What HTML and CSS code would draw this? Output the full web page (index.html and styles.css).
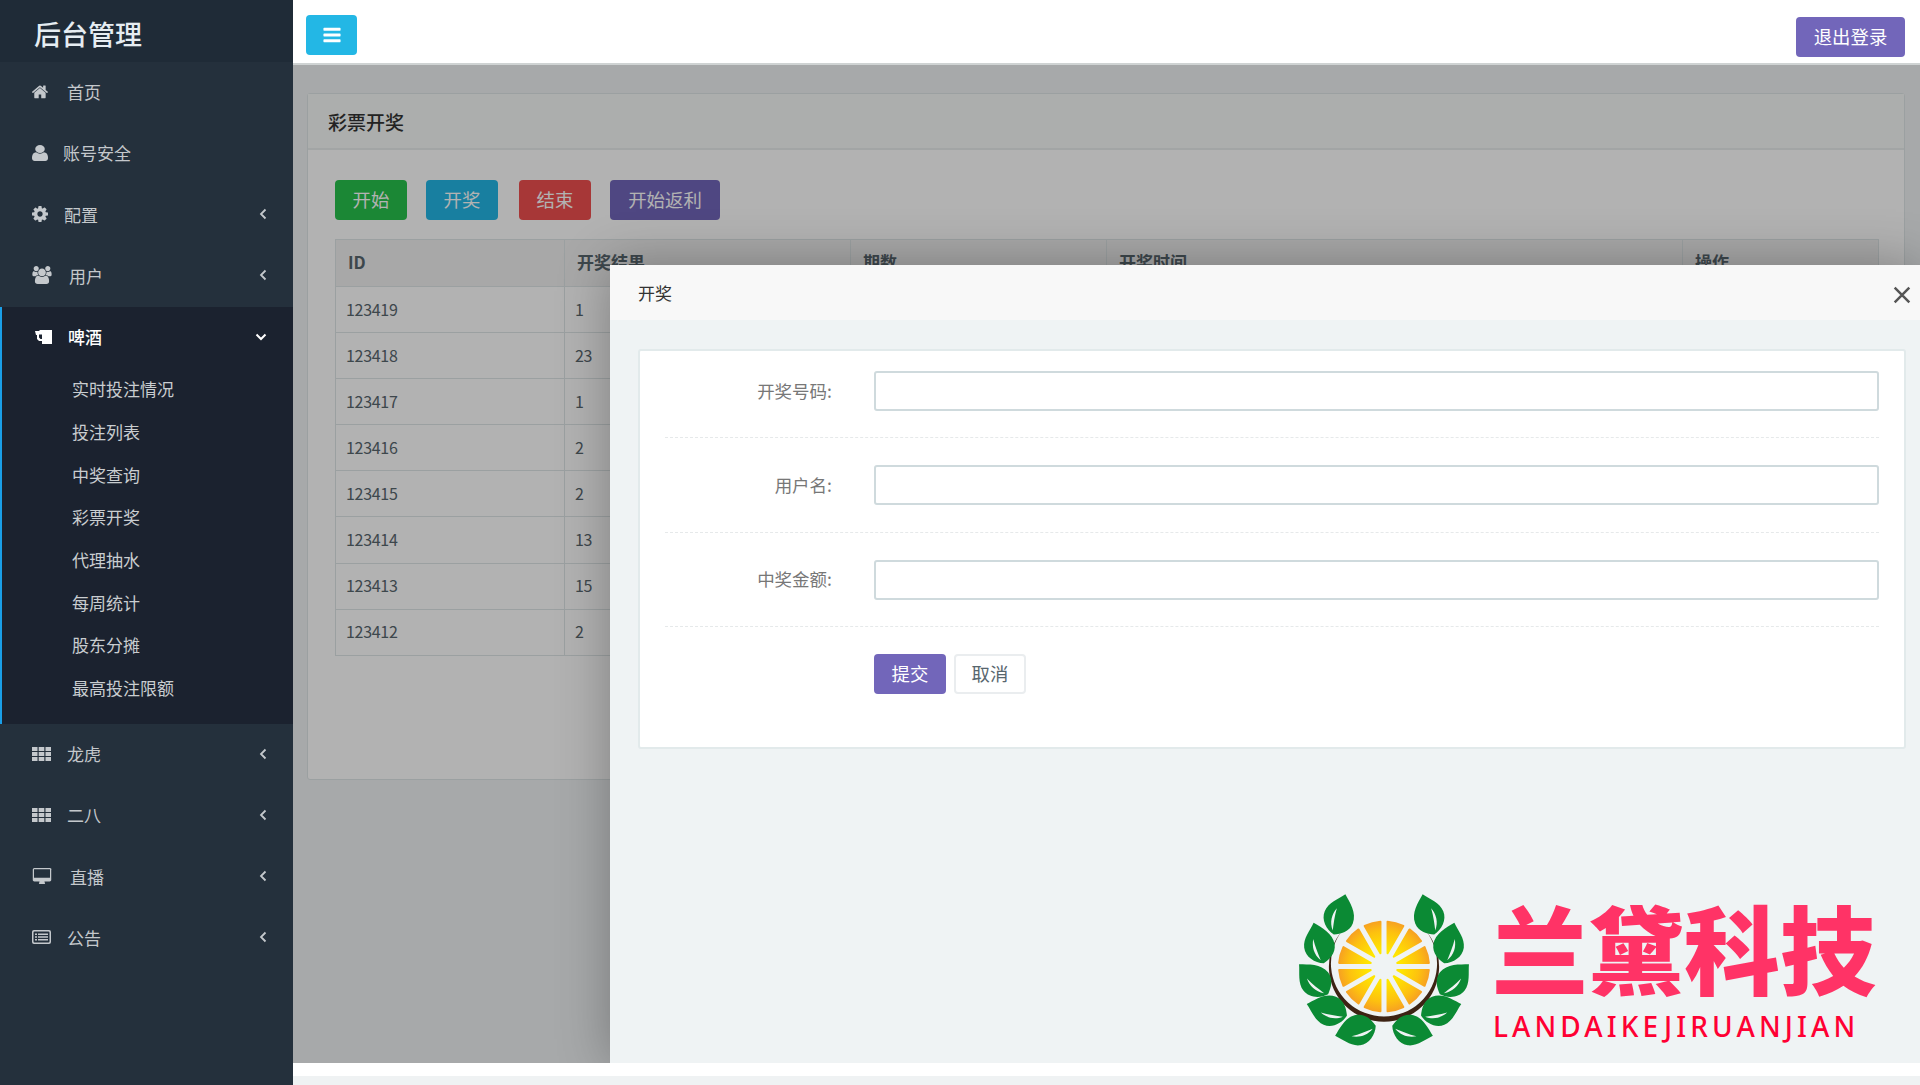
FILE: index.html
```html
<!DOCTYPE html>
<html lang="zh-CN">
<head>
    <meta charset="UTF-8">
    <title>后台管理</title>
    <link rel="stylesheet" href="styles.css">
</head>
<body>
    <svg class="sprites" xmlns="http://www.w3.org/2000/svg">
        <symbol id="i-bars" viewBox="0 0 1792 1792"><path d="M1664 1344v128q0 26-19 45t-45 19h-1408q-26 0-45-19t-19-45v-128q0-26 19-45t45-19h1408q26 0 45 19t19 45zm0-512v128q0 26-19 45t-45 19h-1408q-26 0-45-19t-19-45v-128q0-26 19-45t45-19h1408q26 0 45 19t19 45zm0-512v128q0 26-19 45t-45 19h-1408q-26 0-45-19t-19-45v-128q0-26 19-45t45-19h1408q26 0 45 19t19 45z"/></symbol>
        <symbol id="i-home" viewBox="90 250 1620 1310"><path d="M1472 992v480q0 26-19 45t-45 19h-384v-384h-256v384h-384q-26 0-45-19t-19-45v-480q0-1 .5-3t.5-3l575-474 575 474q1 2 1 6zm223-69l-62 74q-8 9-21 11h-3q-13 0-21-7l-692-577-692 577q-12 8-24 7-13-2-21-11l-62-74q-8-10-7-23.5t11-21.5l719-599q32-26 76-26t76 26l244 204v-195q0-14 9-23t23-9h192q14 0 23 9t9 23v408l219 182q10 8 11 21.5t-7 23.5z"/></symbol>
        <symbol id="i-user" viewBox="256 128 1280 1536" preserveAspectRatio="none"><path d="M1536 1399q0 109-62.5 187t-150.5 78h-854q-88 0-150.5-78t-62.5-187q0-85 8.5-160.5t31.5-152 58.5-131 94-89 134.5-34.5q131 128 313 128t313-128q76 0 134.5 34.5t94 89 58.5 131 31.5 152 8.5 160.5zm-256-887q0 159-112.5 271.5t-271.5 112.5-271.5-112.5-112.5-271.5 112.5-271.5 271.5-112.5 271.5 112.5 112.5 271.5z"/></symbol>
        <symbol id="i-gear" viewBox="128 128 1536 1536"><path d="M1152 896q0-106-75-181t-181-75-181 75-75 181 75 181 181 75 181-75 75-181zm512-109v222q0 12-8 23t-20 13l-185 28q-19 54-39 91 35 50 107 138 10 12 10 25t-9 23q-27 37-99 108t-94 71q-12 0-26-9l-138-108q-44 23-91 38-16 136-29 186-7 28-36 28h-222q-14 0-24.5-8.5t-11.5-21.5l-28-184q-49-16-90-37l-141 107q-10 9-25 9-14 0-25-11-126-114-165-168-7-10-7-23 0-12 8-23 15-21 51-66.5t54-70.5q-27-50-41-99l-183-27q-13-2-21-12.5t-8-23.5v-222q0-12 8-23t19-13l186-28q14-46 39-92-40-57-107-138-10-12-10-24 0-10 9-23 26-36 98.5-107.5t94.5-71.5q13 0 26 10l138 107q44-23 91-38 16-136 29-186 7-28 36-28h222q14 0 24.5 8.5t11.5 21.5l28 184q49 16 90 37l142-107q9-9 24-9 13 0 25 10 129 119 165 170 7 8 7 22 0 12-8 23-15 21-51 66.5t-54 70.5q26 50 41 98l183 28q13 2 21 12.5t8 23.5z"/></symbol>
        <symbol id="i-users" viewBox="0 0 1920 1792"><path d="M593 896q-162 5-265 128h-134q-82 0-138-40.5t-56-118.5q0-353 124-353 6 0 43.5 21t97.5 42.5 119 21.5q67 0 133-23-5 37-5 66 0 139 81 256zm1071 637q0 120-73 189.5t-194 69.5h-874q-121 0-194-69.5t-73-189.5q0-53 3.5-103.5t14-109 26.5-108.5 43-97.5 62-81 85.5-53.5 111.5-20q10 0 43 21.5t73 48 107 48 135 21.5 135-21.5 107-48 73-48 43-21.5q61 0 111.5 20t85.5 53.5 62 81 43 97.5 26.5 108.5 14 109 3.5 103.5zm-1024-1277q0 106-75 181t-181 75-181-75-75-181 75-181 181-75 181 75 75 181zm704 384q0 159-112.5 271.5t-271.5 112.5-271.5-112.5-112.5-271.5 112.5-271.5 271.5-112.5 271.5 112.5 112.5 271.5zm576 225q0 78-56 118.5t-138 40.5h-134q-103-123-265-128 81-117 81-256 0-29-5-66 66 23 133 23 59 0 119-21.5t97.5-42.5 43.5-21q124 0 124 353zm-128-609q0 106-75 181t-181 75-181-75-75-181 75-181 181-75 181 75 75 181z"/></symbol>
        <symbol id="i-beer" viewBox="0 0 17 14"><path fill-rule="evenodd" d="M0 1h4l1-1h12v14H7v-3H4L2 9V5H1zM4 4.500v3l1.500 1.500H7V4.500z"/></symbol>
        <symbol id="i-th" viewBox="0 0 19 14"><path d="M0 0h5.500v4H0zM6.700 0h5.600v4H6.700zM13.500 0H19v4h-5.500zM0 5h5.500v4H0zM6.700 5h5.600v4H6.700zM13.500 5H19v4h-5.500zM0 10h5.500v4H0zM6.700 10h5.600v4H6.700zM13.500 10H19v4h-5.500z"/></symbol>
        <symbol id="i-desktop" viewBox="0 0 1920 1664"><path d="M1792 992v-832q0-13-9.500-22.500t-22.500-9.500h-1600q-13 0-22.500 9.500t-9.500 22.500v832q0 13 9.500 22.500t22.500 9.500h1600q13 0 22.500-9.500t9.500-22.500zm128-832v1088q0 66-47 113t-113 47h-544q0 37 16 77.500t32 71 16 43.500q0 26-19 45t-45 19h-512q-26 0-45-19t-19-45q0-14 16-44t32-70 16-78h-544q-66 0-113-47t-47-113v-1088q0-66 47-113t113-47h1632q66 0 113 47t47 113z"/></symbol>
        <symbol id="i-list" viewBox="0 0 19 14"><path fill-rule="evenodd" d="M2 0h15a2 2 0 0 1 2 2v10a2 2 0 0 1-2 2H2a2 2 0 0 1-2-2V2a2 2 0 0 1 2-2zM1.500 2.500v9a1 1 0 0 0 1 1h14a1 1 0 0 0 1-1v-9a1 1 0 0 0-1-1h-14a1 1 0 0 0-1 1zM3 3.500h2v1.500H3zM6 3.500h10v1.500H6zM3 6.300h2v1.500H3zM6 6.300h10v1.500H6zM3 9h2v1.500H3zM6 9h10v1.500H6z"/></symbol>
        <symbol id="i-left" viewBox="0 0 8 12"><path d="M6.500 1.500L2 6l4.500 4.500" fill="none" stroke="currentColor" stroke-width="1.800"/></symbol>
        <symbol id="i-down" viewBox="0 0 12 8"><path d="M1.500 1.500L6 6l4.500-4.500" fill="none" stroke="currentColor" stroke-width="2"/></symbol>
        <symbol id="leaf" viewBox="-16 -22 32 44" preserveAspectRatio="none"><path d="M0-20.500C6-14 15-6 14 5 13 14 6 18 0 20.500-8 18-15 10-14 1-13-8-5-14 0-20.500z" fill="#0b8a34"/><path d="M-2 17C-7 10-7 2-4-5-4 3-3 10-2 17z" fill="#eff3f4"/></symbol>
        <radialGradient id="citrus" gradientUnits="userSpaceOnUse" cx="0" cy="0" r="46"><stop offset="0.350" stop-color="#ffe600"/><stop offset="0.750" stop-color="#fdc10f"/><stop offset="1" stop-color="#f69d24"/></radialGradient>
        <symbol id="wedge" viewBox="-50 -50 100 100" overflow="visible"><path d="M0-13.500L8-43.300A44 44 0 0 0-8-43.300z" fill="url(#citrus)" stroke="url(#citrus)" stroke-width="2" stroke-linejoin="round"/></symbol>
    </svg>

    <aside class="sidebar">
        <div class="brand">后台管理</div>
        <ul class="nav">
            <li><a class="nav-link"><svg class="ic ic-home"><use href="#i-home"/></svg>首页</a></li>
            <li><a class="nav-link"><svg class="ic ic-user"><use href="#i-user"/></svg>账号安全</a></li>
            <li><a class="nav-link"><svg class="ic ic-gear"><use href="#i-gear"/></svg>配置<svg class="arrow"><use href="#i-left"/></svg></a></li>
            <li><a class="nav-link"><svg class="ic ic-users"><use href="#i-users"/></svg>用户<svg class="arrow"><use href="#i-left"/></svg></a></li>
            <li class="active">
                <a class="nav-link"><svg class="ic ic-beer"><use href="#i-beer"/></svg>啤酒<svg class="arrow-down"><use href="#i-down"/></svg></a>
                <ul class="subnav">
                    <li>实时投注情况</li>
                    <li>投注列表</li>
                    <li>中奖查询</li>
                    <li>彩票开奖</li>
                    <li>代理抽水</li>
                    <li>每周统计</li>
                    <li>股东分摊</li>
                    <li>最高投注限额</li>
                </ul>
            </li>
            <li><a class="nav-link"><svg class="ic ic-th"><use href="#i-th"/></svg>龙虎<svg class="arrow"><use href="#i-left"/></svg></a></li>
            <li><a class="nav-link"><svg class="ic ic-th"><use href="#i-th"/></svg>二八<svg class="arrow"><use href="#i-left"/></svg></a></li>
            <li><a class="nav-link"><svg class="ic ic-desktop"><use href="#i-desktop"/></svg>直播<svg class="arrow"><use href="#i-left"/></svg></a></li>
            <li><a class="nav-link"><svg class="ic ic-list"><use href="#i-list"/></svg>公告<svg class="arrow"><use href="#i-left"/></svg></a></li>
        </ul>
    </aside>

    <div class="main">
        <header class="topbar">
            <button class="btn btn-info btn-menu"><svg class="bars"><use href="#i-bars"/></svg></button>
            <button class="btn btn-purple btn-logout">退出登录</button>
        </header>

        <section class="content">
            <div class="panel">
                <div class="panel-head">彩票开奖</div>
                <div class="panel-body">
                    <div class="actions">
                        <button class="btn btn-success">开始</button>
                        <button class="btn btn-info">开奖</button>
                        <button class="btn btn-danger">结束</button>
                        <button class="btn btn-purple">开始返利</button>
                    </div>
                    <table class="grid">
                        <thead>
                            <tr><th class="c-id">ID</th><th class="c-res">开奖结果</th><th class="c-no">期数</th><th class="c-time">开奖时间</th><th>操作</th></tr>
                        </thead>
                        <tbody>
                            <tr><td>123419</td><td>1</td><td></td><td></td><td></td></tr>
                            <tr><td>123418</td><td>23</td><td></td><td></td><td></td></tr>
                            <tr><td>123417</td><td>1</td><td></td><td></td><td></td></tr>
                            <tr><td>123416</td><td>2</td><td></td><td></td><td></td></tr>
                            <tr><td>123415</td><td>2</td><td></td><td></td><td></td></tr>
                            <tr><td>123414</td><td>13</td><td></td><td></td><td></td></tr>
                            <tr><td>123413</td><td>15</td><td></td><td></td><td></td></tr>
                            <tr><td>123412</td><td>2</td><td></td><td></td><td></td></tr>
                        </tbody>
                    </table>
                </div>
            </div>

            <div class="shade"></div>

            <div class="modal">
                <div class="modal-head">
                    <span>开奖</span>
                    <svg class="close" viewBox="0 0 16 16"><path d="M1.500 1.500l13 13M14.500 1.500l-13 13"/></svg>
                </div>
                <div class="modal-body">
                    <form class="form-card">
                        <div class="form-row"><label>开奖号码:</label><input type="text"></div>
                        <div class="form-row"><label>用户名:</label><input type="text"></div>
                        <div class="form-row"><label>中奖金额:</label><input type="text"></div>
                        <div class="form-btns">
                            <button type="button" class="btn btn-purple">提交</button>
                            <button type="button" class="btn btn-default">取消</button>
                        </div>
                    </form>
                </div>
            </div>
        </section>

        <div class="strip"></div>
        <footer class="foot"></footer>
    </div>

    <div class="watermark">
        <svg class="wm-logo" viewBox="-87 -72 174 146">
            <use href="#wedge" x="-50" y="-50" width="100" height="100" transform="rotate(15)"/>
            <use href="#wedge" x="-50" y="-50" width="100" height="100" transform="rotate(45)"/>
            <use href="#wedge" x="-50" y="-50" width="100" height="100" transform="rotate(75)"/>
            <use href="#wedge" x="-50" y="-50" width="100" height="100" transform="rotate(105)"/>
            <use href="#wedge" x="-50" y="-50" width="100" height="100" transform="rotate(135)"/>
            <use href="#wedge" x="-50" y="-50" width="100" height="100" transform="rotate(165)"/>
            <use href="#wedge" x="-50" y="-50" width="100" height="100" transform="rotate(195)"/>
            <use href="#wedge" x="-50" y="-50" width="100" height="100" transform="rotate(225)"/>
            <use href="#wedge" x="-50" y="-50" width="100" height="100" transform="rotate(255)"/>
            <use href="#wedge" x="-50" y="-50" width="100" height="100" transform="rotate(285)"/>
            <use href="#wedge" x="-50" y="-50" width="100" height="100" transform="rotate(315)"/>
            <use href="#wedge" x="-50" y="-50" width="100" height="100" transform="rotate(345)"/>
            <path d="M-41-35A54 54 0 1 0 41-35 52 52 0 1 1-41-35z" fill="#3d2314"/>
            <g id="leaves">
                <use href="#leaf" x="-17" y="-22" width="34" height="44" transform="translate(-43.500 -51) rotate(16)"/>
                <use href="#leaf" x="-17" y="-22" width="34" height="44" transform="translate(-64 -23) rotate(-14)"/>
                <use href="#leaf" x="-17" y="-22" width="34" height="44" transform="translate(-69 12.500) rotate(-44)"/>
                <use href="#leaf" x="-17" y="-22" width="34" height="44" transform="translate(-56 42.500) rotate(-74)"/>
                <use href="#leaf" x="-17" y="-22" width="34" height="44" transform="translate(-28 63) rotate(-104)"/>
            </g>
            <use href="#leaves" transform="scale(-1 1)"/>
        </svg>
        <div class="wm-text">
            <div class="wm-cn">兰黛科技</div>
            <div class="wm-en">LANDAIKEJIRUANJIAN</div>
        </div>
    </div>
</body>
</html>
```

FILE: styles.css
```css
* {
    box-sizing: border-box;
}
html, body {
    margin: 0;
    height: 100%;
}
body {
    display: flex;
    height: 1085px;
    overflow: hidden;
    position: relative;
    font-family: "Noto Sans CJK SC", "Liberation Sans", sans-serif;
    font-size: 17px;
    color: #58666e;
    background: #f0f3f4;
}
ul {
    list-style: none;
    margin: 0;
    padding: 0;
}
.sprites {
    position: absolute;
    width: 0;
    height: 0;
}

/* sidebar */
.sidebar {
    width: 293px;
    flex: none;
    background: #24303c;
    color: #c4c8cc;
}
.brand {
    height: 62px;
    padding-left: 34px;
    font-size: 27px;
    font-weight: 500;
    line-height: 68px;
    color: #e6edf2;
    background: #1f2b37;
}
.nav-link {
    display: flex;
    align-items: center;
    height: 61.25px;
    padding: 0 0 2px 32px;
}
.ic {
    fill: currentColor;
    flex: none;
}
.ic-home { width: 16px; height: 14px; margin-right: 19px; }
.ic-user { width: 16px; height: 16px; margin-right: 15px; }
.ic-gear { width: 16px; height: 16px; margin-right: 16px; }
.ic-users { width: 20px; height: 18px; margin-right: 17px; }
.ic-beer { width: 17px; height: 14px; margin: 0 16px 0 3px; }
.ic-th { width: 19px; height: 14px; margin-right: 16px; }
.ic-desktop { width: 20px; height: 16px; margin-right: 18px; }
.ic-list { width: 19px; height: 14px; margin-right: 16px; }
.arrow {
    width: 8px;
    height: 12px;
    margin-left: auto;
    margin-right: 26px;
}
.arrow-down {
    width: 12px;
    height: 8px;
    margin-left: auto;
    margin-right: 26px;
}
.active {
    background: #1b222f;
    box-shadow: inset 2px 0 0 #1a9fe8;
    color: #fff;
    height: 417px;
    font-weight: 500;
}
.subnav {
    padding-left: 72px;
    color: #c9cdd0;
    font-weight: 400;
}
.subnav li {
    height: 42.7px;
    line-height: 42.7px;
}

/* main */
.main {
    flex: 1;
    display: flex;
    flex-direction: column;
    min-width: 0;
}
.topbar {
    height: 65px;
    flex: none;
    display: flex;
    align-items: flex-start;
    justify-content: space-between;
    padding: 15px 15px 0 13px;
    background: #fff;
    border-bottom: 2px solid #cfd3d3;
}
.btn {
    height: 40px;
    padding: 0 0 3px;
    border: 1px solid transparent;
    border-radius: 4px;
    font-family: inherit;
    font-size: 18.4px;
    line-height: 34px;
    color: #fff;
    cursor: pointer;
}
.btn-success { background: #27c24c; }
.btn-info { background: #23b7e5; }
.btn-danger { background: #f05050; }
.btn-purple { background: #7266ba; }
.btn-default {
    background: #fff;
    border: 2px solid #eaedef;
    color: #58666e;
}
.btn-menu {
    width: 51px;
    padding: 0;
}
.bars {
    display: block;
    width: 20px;
    height: 20px;
    margin: 0 auto;
    fill: #fff;
}
.btn-logout {
    margin-top: 2px;
    width: 109px;
}

.content {
    position: relative;
    height: 998px;
    flex: none;
    padding: 28px 15px 0 14px;
    overflow: hidden;
}
.panel {
    height: 687px;
    background: #fff;
    border: 1px solid #dee5e7;
    border-radius: 3px;
}
.panel-head {
    height: 56px;
    padding-left: 20px;
    font-size: 19px;
    font-weight: 500;
    line-height: 56px;
    color: #333;
    background: #f6faf8;
    border-bottom: 2px solid #e8eded;
}
.panel-body {
    padding: 30px 24px 0 27px;
}
.actions {
    display: flex;
    height: 40px;
    margin-bottom: 19px;
}
.actions .btn {
    width: 72px;
    margin-right: 19px;
}
.actions .btn-info {
    margin-right: 21px;
}
.actions .btn-purple {
    width: 110px;
}
.grid {
    width: 1544px;
    border-collapse: collapse;
    table-layout: fixed;
    font-size: 17px;
}
.grid th, .grid td {
    border: 1px solid #dee5e7;
    padding: 0 10px 2px;
    text-align: left;
}
.grid th {
    height: 47px;
    padding: 0 12px 4px;
    background: #f1f1f1;
    font-weight: 700;
}
.grid td {
    height: 46.1px;
    font-size: 16px;
    letter-spacing: -0.3px;
}
.c-id { width: 229px; }
.c-res { width: 286px; }
.c-no { width: 256px; }
.c-time { width: 576px; }

/* layer on top of the page */
.shade {
    position: absolute;
    inset: 0;
    background: rgba(0, 0, 0, 0.3);
}
.modal {
    position: absolute;
    right: 0;
    bottom: 0;
    width: 1310px;
    height: 798px;
    background: #eff3f4;
    box-shadow: 1px 1px 50px rgba(0, 0, 0, 0.3);
}
.modal-head {
    height: 55px;
    display: flex;
    align-items: center;
    justify-content: space-between;
    padding: 0 9px 0 28px;
    color: #333;
    background: #f8f8f8;
}
.close {
    width: 18px;
    height: 18px;
    margin-top: 4px;
    fill: none;
    stroke: #555;
    stroke-width: 2.2;
}
.modal-body {
    padding: 29px 14px 0 28px;
}
.form-card {
    height: 400px;
    padding: 20px 25px 0 25px;
    background: #fff;
    border: 2px solid #e2eaeb;
    border-radius: 3px;
}
.form-row {
    display: grid;
    grid-template-columns: 167px 1fr;
    column-gap: 42px;
    align-items: center;
    padding-bottom: 26.4px;
    margin-bottom: 27px;
    border-bottom: 1px dashed #e6e9ea;
}
.form-row label {
    padding-bottom: 2px;
    font-size: 17.5px;
    text-align: right;
    color: #777;
}
.form-row input {
    height: 40px;
    border: 2px solid #cfdadd;
    border-radius: 3px;
    background: #fff;
}
.form-btns {
    display: flex;
    gap: 8px;
    padding-left: 209px;
}
.form-btns .btn {
    width: 72px;
}

.strip {
    height: 13px;
    flex: none;
    background: #fff;
}
.foot {
    flex: 1;
    background: #eff2f3;
}

/* watermark, sits on top of everything */
.watermark {
    position: absolute;
    left: 1295px;
    top: 893px;
    display: flex;
    gap: 19px;
}
.wm-logo {
    width: 178px;
    height: 149px;
    flex: none;
    overflow: visible;
}
.wm-cn {
    height: 106px;
    font-size: 96px;
    font-weight: 900;
    line-height: 106px;
    color: #ff3366;
    white-space: nowrap;
}
.wm-en {
    margin: 10px 0 0 1px;
    font-family: "Noto Sans", sans-serif;
    font-size: 28px;
    font-weight: 500;
    line-height: 34px;
    letter-spacing: 4.1px;
    color: #ff0033;
    white-space: nowrap;
}
```
